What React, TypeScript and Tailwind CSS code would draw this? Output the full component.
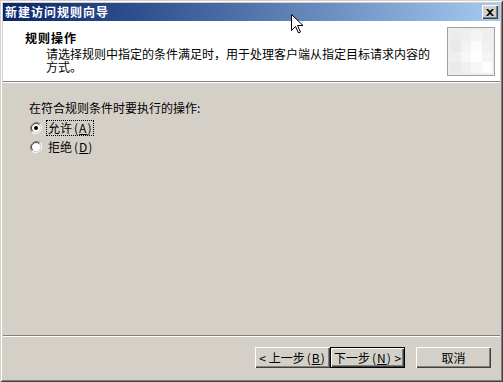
import React from 'react';

const cells = [
  '#ececec', '#efefef', '#f4f4f4', '#eeeeee',
  '#e9e9e9', '#f3f3f3', '#fbfbfb', '#f1f1f1',
  '#efefef', '#f7f7f7', '#ffffff', '#f5f5f5',
  '#eaeaea', '#f0f0f0', '#f6f6f6', '#fdfdfd',
];

const Radio = ({ checked }: { checked?: boolean }) => (
  <svg width="12" height="12" viewBox="0 0 12 12" className="shrink-0">
    <path d="M10.2 1.8A6 6 0 0 0 1.8 10.2" fill="none" stroke="#808080" strokeWidth="1" />
    <path d="M1.8 10.2A6 6 0 0 0 10.2 1.8" fill="none" stroke="#ffffff" strokeWidth="1" />
    <circle cx="6" cy="6" r="4.5" fill="#ffffff" />
    <path d="M9.2 2.8A4.5 4.5 0 0 0 2.8 9.2" fill="none" stroke="#404040" strokeWidth="1" />
    <path d="M2.8 9.2A4.5 4.5 0 0 0 9.2 2.8" fill="none" stroke="#d4d0c8" strokeWidth="1" />
    {checked && <circle cx="6" cy="6" r="2" fill="#000" />}
  </svg>
);

// (A) style mnemonic, a bit wider like the bitmap font
const Key = ({ k }: { k: string }) => (
  <span className="ml-[2px] tracking-[1px]">
    (<u>{k}</u>)
  </span>
);

const Button = ({ children, primary }: { children: React.ReactNode; primary?: boolean }) => (
  <button
    className={
      primary
        ? 'w-[75px] h-[21px] flex items-center justify-center bg-[#d4d0c8] border border-black shadow-[inset_1px_1px_0_#fff,inset_-1px_-1px_0_#404040,inset_-2px_-2px_0_#808080] text-[12px] leading-[14px]'
        : 'w-[75px] h-[21px] flex items-center justify-center bg-[#d4d0c8] shadow-[inset_1px_1px_0_#fff,inset_-1px_-1px_0_#404040,inset_-2px_-2px_0_#808080] text-[12px] leading-[14px]'
    }
  >
    {children}
  </button>
);

export default function App() {
  return (
    <div className="relative w-[503px] h-[382px] bg-[#d4d0c8] p-[3px] flex flex-col text-black font-['SimSun','Noto_Sans_CJK_SC',sans-serif] shadow-[inset_1px_1px_0_#d4d0c8,inset_-1px_-1px_0_#404040,inset_2px_2px_0_#fff,inset_-2px_-2px_0_#808080]">
      {/* title bar */}
      <div className="h-[18px] flex items-center justify-between bg-gradient-to-r from-[#0a246a] to-[#a6caf0] pl-[2px] pr-[2px]">
        <span className="text-white text-[12px] font-bold leading-[14px] tracking-[1px]">新建访问规则向导</span>
        <div className="w-[16px] h-[14px] bg-[#d4d0c8] flex items-center justify-center shadow-[inset_1px_1px_0_#fff,inset_-1px_-1px_0_#404040,inset_-2px_-2px_0_#808080]">
          <svg width="8" height="7" viewBox="0 0 8 7">
            <path d="M0 0h2l2 2 2-2h2L5 3.5 8 7H6L4 5 2 7H0l3-3.5z" fill="#000" />
          </svg>
        </div>
      </div>

      {/* header */}
      <div className="h-[61px] bg-white flex justify-between border-b border-[#808080]">
        <div className="pt-[10px] pl-[22px]">
          <div className="text-[12px] font-bold leading-[14px] tracking-[1px]">规则操作</div>
          <div className="mt-[2px] ml-[21px] w-[390px] text-[12px] leading-[13px]">
            请选择规则中指定的条件满足时，用于处理客户端从指定目标请求内容的方式。
          </div>
        </div>
        <div className="mt-[6px] mr-[5px] w-[48px] h-[49px] border border-[#a0a0a0] bg-[#eeeeee] grid grid-cols-4 grid-rows-4 p-[2px]">
          {cells.map((c, i) => (
            <div key={i} style={{ backgroundColor: c }} />
          ))}
        </div>
      </div>
      <div className="h-px bg-white" />

      {/* body */}
      <div className="flex-1 pt-[18px] pl-[26px] text-[12px] leading-[14px]">
        <div>在符合规则条件时要执行的操作:</div>
        <div className="mt-[4px] flex flex-col gap-[2px]">
          <div className="h-[17px] flex items-center">
            <div className="ml-[1px]"><Radio checked /></div>
            <span className="ml-[5px] px-[1px] outline outline-1 outline-dotted outline-black">
              允许<Key k="A" />
            </span>
          </div>
          <div className="h-[17px] flex items-center">
            <div className="ml-[1px]"><Radio /></div>
            <span className="ml-[6px]">
              拒绝<Key k="D" />
            </span>
          </div>
        </div>
      </div>

      {/* separator */}
      <div className="h-px bg-[#808080]" />
      <div className="h-px bg-white" />

      {/* buttons */}
      <div className="h-[42px] flex items-start justify-end pt-[10px] pr-[9px]">
        <Button>&lt;&nbsp;上一步<Key k="B" /></Button>
        <Button primary>下一步<Key k="N" />&nbsp;&gt;</Button>
        <div className="ml-[11px]">
          <Button>取消</Button>
        </div>
      </div>

      {/* mouse cursor */}
      <svg className="absolute left-[291px] top-[14px]" width="13" height="20" viewBox="0 0 13 20">
        <path d="M0.5 0.5v16l4-4 3 6.5 2-1-3-6.5h5.5z" fill="#fff" stroke="#000" strokeWidth="1" />
      </svg>
    </div>
  );
}
